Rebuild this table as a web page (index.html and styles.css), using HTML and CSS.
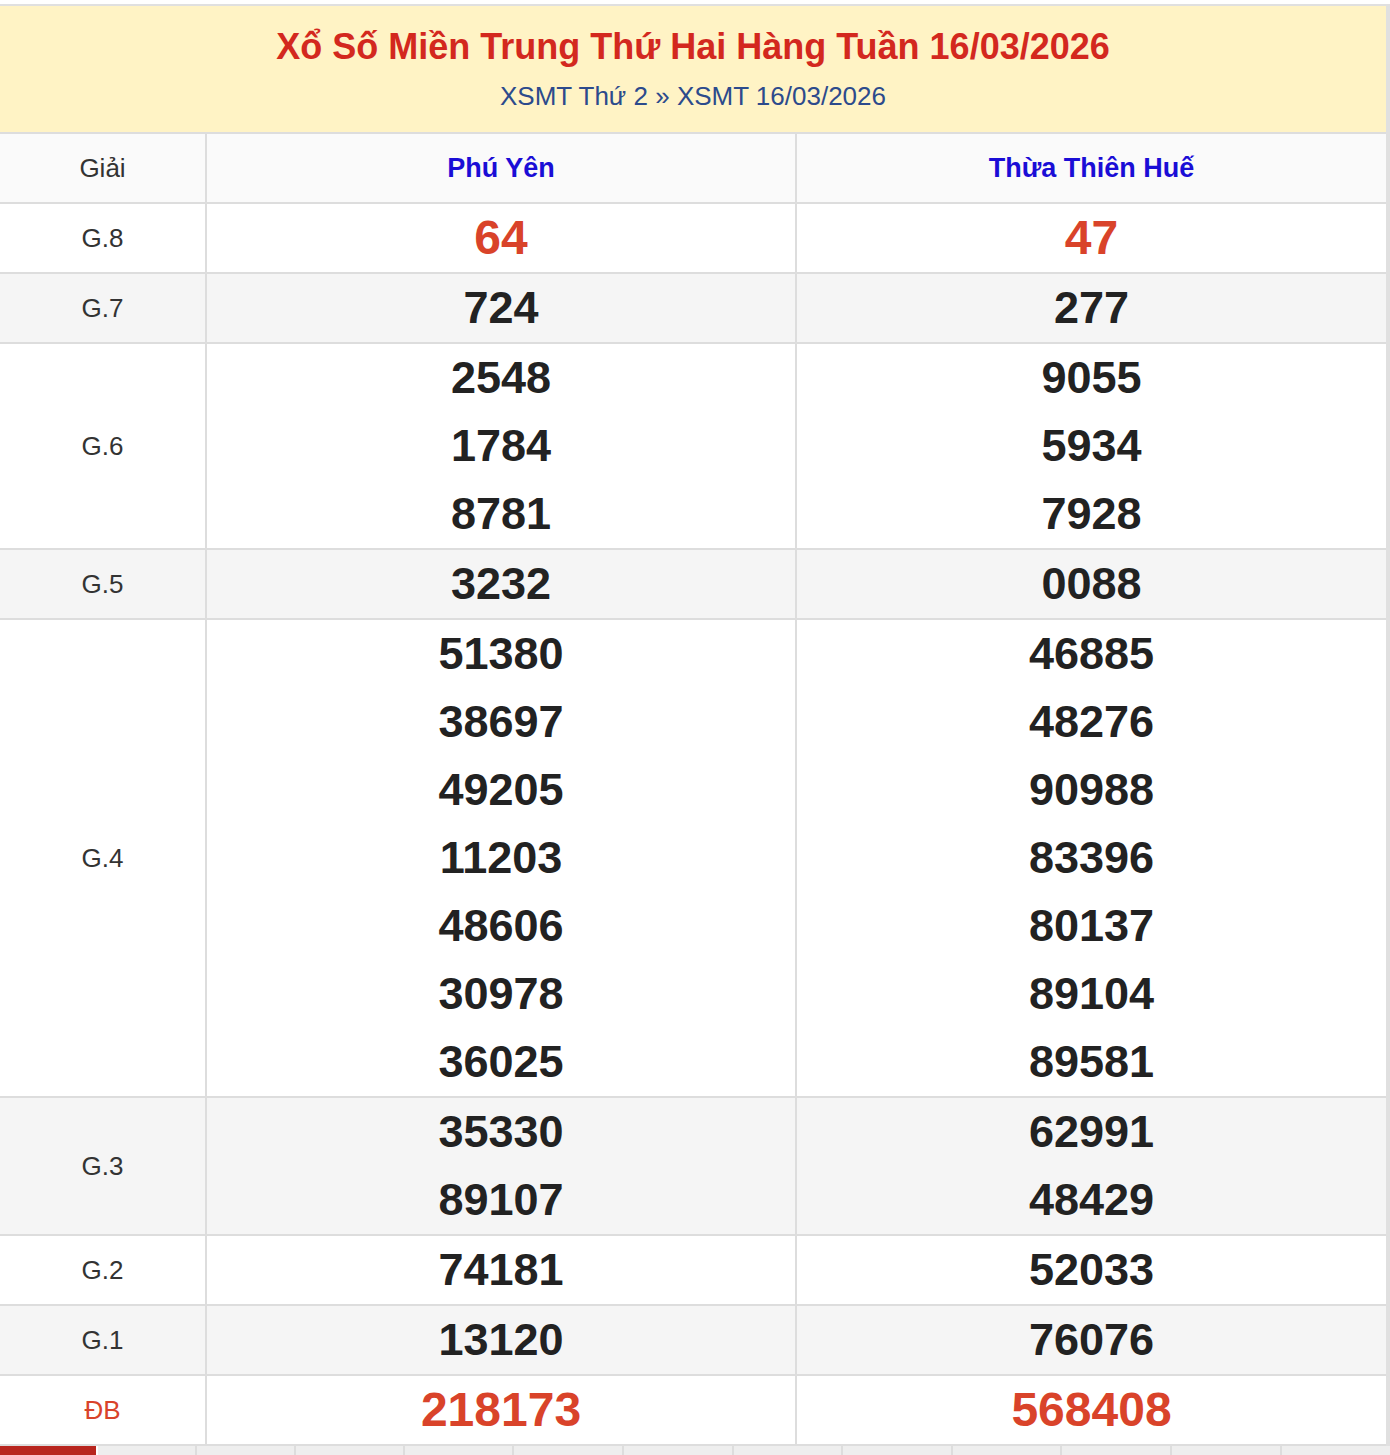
FILE: index.html
```html
<!DOCTYPE html>
<html lang="vi">
<head>
<meta charset="utf-8">
<title>XSMT 16/03/2026</title>
<link rel="stylesheet" href="styles.css">
</head>
<body>
<div class="wrap">
  <div class="head">
    <h1 class="title">Xổ Số Miền Trung Thứ Hai Hàng Tuần 16/03/2026</h1>
    <div class="crumb"><a href="#">XSMT Thứ 2</a> » <a href="#">XSMT 16/03/2026</a></div>
  </div>
  <table class="res">
    <colgroup><col class="c1"><col class="c2"><col class="c3"></colgroup>
    <thead>
      <tr><th class="lbl">Giải</th><th class="prov">Phú Yên</th><th class="prov">Thừa Thiên Huế</th></tr>
    </thead>
    <tbody>
      <tr class="w"><td class="lbl">G.8</td><td><div class="n red">64</div></td><td><div class="n red">47</div></td></tr>
      <tr class="g"><td class="lbl">G.7</td><td><div class="n">724</div></td><td><div class="n">277</div></td></tr>
      <tr class="w"><td class="lbl">G.6</td><td><div class="n">2548</div><div class="n">1784</div><div class="n">8781</div></td><td><div class="n">9055</div><div class="n">5934</div><div class="n">7928</div></td></tr>
      <tr class="g"><td class="lbl">G.5</td><td><div class="n">3232</div></td><td><div class="n">0088</div></td></tr>
      <tr class="w"><td class="lbl">G.4</td><td><div class="n">51380</div><div class="n">38697</div><div class="n">49205</div><div class="n">11203</div><div class="n">48606</div><div class="n">30978</div><div class="n">36025</div></td><td><div class="n">46885</div><div class="n">48276</div><div class="n">90988</div><div class="n">83396</div><div class="n">80137</div><div class="n">89104</div><div class="n">89581</div></td></tr>
      <tr class="g"><td class="lbl">G.3</td><td><div class="n">35330</div><div class="n">89107</div></td><td><div class="n">62991</div><div class="n">48429</div></td></tr>
      <tr class="w"><td class="lbl">G.2</td><td><div class="n">74181</div></td><td><div class="n">52033</div></td></tr>
      <tr class="g"><td class="lbl">G.1</td><td><div class="n">13120</div></td><td><div class="n">76076</div></td></tr>
      <tr class="w"><td class="lbl db">ĐB</td><td><div class="n red big">218173</div></td><td><div class="n red big">568408</div></td></tr>
    </tbody>
  </table>
  <div class="tabs">
    <div class="tab on" style="width:96px"></div>
    <div class="tab" style="width:97px"></div>
    <div class="tab" style="width:97px"></div>
    <div class="tab" style="width:107px"></div>
    <div class="tab" style="width:107px"></div>
    <div class="tab" style="width:108px"></div>
    <div class="tab" style="width:108px"></div>
    <div class="tab" style="width:107px"></div>
    <div class="tab" style="width:108px"></div>
    <div class="tab" style="width:107px"></div>
    <div class="tab" style="width:108px"></div>
    <div class="tab" style="width:108px"></div>
    <div class="tab" style="width:108px"></div>
  </div>
</div>
</body>
</html>
```
FILE: styles.css
```css
html, body {
  margin: 0;
  padding: 0;
  background: #fff;
}
body {
  font-family: "Liberation Sans", Arial, Helvetica, sans-serif;
  color: #222;
}
.wrap {
  margin-top: 4px;
  width: 1386px;
  border-top: 2px solid #e0e0e0;
  border-right: 4px solid #e0e0e0;
}
.head {
  background: #fff3c5;
  height: 126px;
  box-sizing: border-box;
  padding-top: 21px;
  text-align: center;
}
.title {
  margin: 0;
  font-size: 36px;
  line-height: 40px;
  font-weight: bold;
  color: #d3281e;
}
.crumb {
  margin-top: 14px;
  font-size: 26px;
  line-height: 30px;
  color: #2c4a8c;
}
.crumb a {
  color: #2c4a8c;
  text-decoration: none;
}
.res {
  width: 1386px;
  border-collapse: collapse;
  table-layout: fixed;
}
.c1 { width: 206px; }
.c2 { width: 590px; }
.c3 { width: 590px; }
.res th, .res td {
  border: 2px solid #dddddd;
  padding: 0;
  text-align: center;
  vertical-align: middle;
}
.res tr > :first-child { border-left: none; }
.res tr > :last-child { border-right: none; }
.res thead tr { background: #fafafa; }
.res th { height: 68px; }
.res tr.w { background: #fff; }
.res tr.g { background: #f5f5f5; }
.lbl {
  font-size: 26px;
  font-weight: normal;
  color: #333;
}
.prov {
  font-size: 27px;
  font-weight: bold;
  color: #1a0dd6;
}
.db { color: #d9432a; }
.n {
  height: 68px;
  line-height: 68px;
  font-size: 45px;
  font-weight: bold;
  color: #222;
}
.n.red { color: #d9432a; font-size: 48px; }
.tabs {
  display: flex;
  height: 40px;
}
.tab {
  flex: none;
  background: #eeeeee;
  border-right: 2px solid #dddddd;
}
.tab.on {
  background: #b8251e;
  border-right-color: #fff;
}
```
